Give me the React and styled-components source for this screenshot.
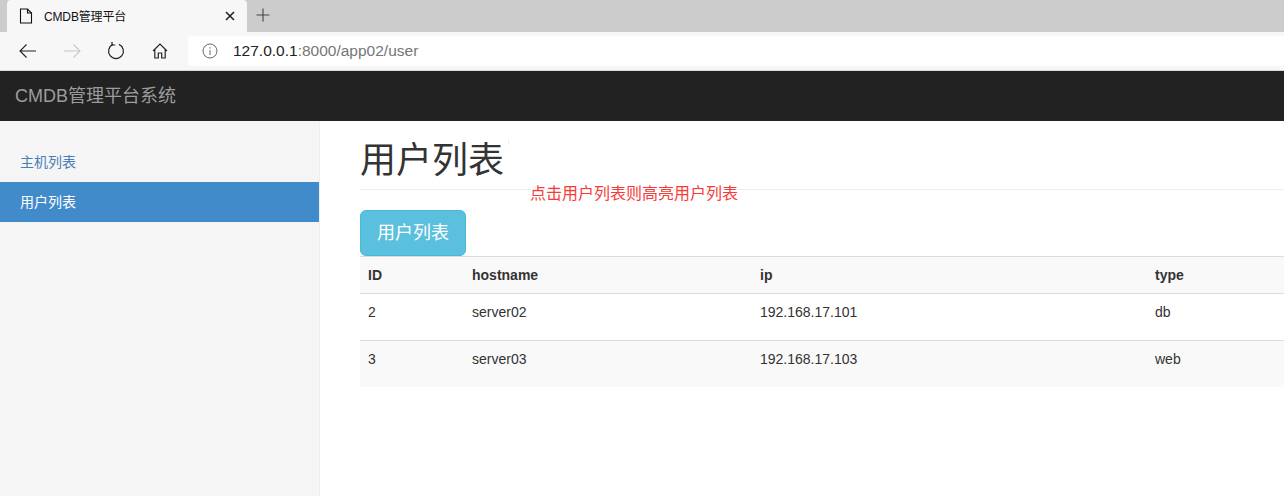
import React from "react";
import styled, { createGlobalStyle } from "styled-components";

const Global = createGlobalStyle`
  html, body { margin: 0; padding: 0; background: #fff; overflow: hidden; }
  * { box-sizing: border-box; }
  body { font-family: "Liberation Sans", "Noto Sans CJK SC", sans-serif; color: #333; font-size: 14px; }
`;
const Page = styled.div`width: 1284px; height: 496px; display: flex; flex-direction: column; overflow: hidden;`;
const TabStrip = styled.div`height: 32px; background: #cccccc; display: flex; align-items: flex-end; padding-left: 7px; flex: none;`;
const Tab = styled.div`width: 240px; height: 32px; background: #f7f7f7; border-radius: 4px 4px 0 0; display: flex; align-items: center; padding-left: 12px; padding-right: 12px;`;
const TabTitle = styled.span`font-size: 12px; letter-spacing: -0.15px; color: #111; margin-left: 11px; flex: 1; white-space: nowrap; position: relative; top: -1px;`;
const TabAction = styled.svg`display: block; flex: none;`;
const NewTab = styled.svg`display: block; margin: 0 0 10px 9px;`;
const Toolbar = styled.div`height: 39px; background: #f7f7f7; display: flex; align-items: center; flex: none; padding-left: 16px; border-bottom: 1px solid #d8d8d8;`;
const NavIcon = styled.svg`display: block; flex: none; margin-right: ${p => p.$gap}px;`;
const Address = styled.div`flex: 1; height: 30px; background: #fff; border-radius: 4px 0 0 4px; display: flex; align-items: center; padding-left: 14px; margin-top: -1px;`;
const Url = styled.span`font-size: 15.5px; margin-left: 15px; color: #767676; white-space: nowrap;`;
const Host = styled.span`color: #222;`;
const Navbar = styled.div`height: 50px; background: #222; flex: none; display: flex; align-items: center; padding-left: 15px;`;
const Brand = styled.span`font-size: 18px; color: #9d9d9d; position: relative; top: -2px;`;
const Body = styled.div`flex: 1; display: flex; min-height: 0;`;
const Sidebar = styled.aside`width: 320px; flex: none; background: #f5f5f5; border-right: 1px solid #eee; padding-top: 21px;`;
const NavItem = styled.div`
  height: 40px; display: flex; align-items: center; padding: 0 0 2px 20px;
  font-size: 14px;
  color: ${p => (p.$active ? "#fff" : "#4a7fb5")};
  background: ${p => (p.$active ? "#428bca" : "transparent")};
`;
const Main = styled.main`flex: 1; padding: 0 0 0 40px; position: relative; min-width: 0;`;
const Heading = styled.h1`margin: 0; height: 69px; border-bottom: 1px solid #eee; font-size: 36px; font-weight: 400; line-height: 40px; padding-top: 20px; color: #333;`;
const Note = styled.span`position: absolute; left: 210px; top: 63px; font-size: 16px; line-height: 20px; color: #f73b3b; white-space: nowrap;`;
const Speck = styled.i`position: absolute; left: 188px; top: 18px; width: 1px; height: 6px; background: #eee;`;
const Button = styled.button`
  display: block; margin: 20px 0 0; width: 106px; height: 46px; padding: 0;
  background: #5bc0de; border: 1px solid #46b8da; border-radius: 6px; color: #fff;
  font-family: inherit; font-size: 18px; line-height: 24px;
`;
const Table = styled.table`width: 924px; border-collapse: collapse; table-layout: fixed; margin-top: 0; font-size: 14px;`;
const Col = styled.col`width: ${p => (p.$w ? `${p.$w}px` : "auto")};`;
const Row = styled.tr`background: ${p => (p.$striped ? "#f9f9f9" : "#fff")};`;
const Th = styled.th`height: 37px; padding: 8px; text-align: left; font-weight: 700; line-height: 20px; border-top: 1px solid #ddd; border-bottom: 1px solid #ddd; vertical-align: middle;`;
const Td = styled.td`height: ${p => p.$h}px; padding: 8px; line-height: 20px; vertical-align: top; border-top: 1px solid #ddd;`;

const rows = [
  { id: "2", cells: ["2", "server02", "192.168.17.101", "db"], height: 47, striped: false },
  { id: "3", cells: ["3", "server03", "192.168.17.103", "web"], height: 46, striped: true },
];

export default function App() {
  return (
    <Page>
      <Global />
      <TabStrip>
        <Tab>
          <TabAction width="14" height="16" viewBox="0 0 14 16" fill="none" stroke="#111" strokeWidth="1.1">
            <path d="M1.5 1h7l4 4v10h-11z" />
            <path d="M8.5 1v4h4" />
          </TabAction>
          <TabTitle>CMDB管理平台</TabTitle>
          <TabAction width="10" height="10" viewBox="0 0 10 10" fill="none" stroke="#222" strokeWidth="1.6">
            <path d="M1 1l8 8M9 1l-8 8" />
          </TabAction>
        </Tab>
        <NewTab width="14" height="14" viewBox="0 0 14 14" fill="none" stroke="#444" strokeWidth="1.1">
          <path d="M7 0.5v13M0.5 7h13" />
        </NewTab>
      </TabStrip>
      <Toolbar>
        <NavIcon $gap={20} width="24" height="18" viewBox="0 0 24 18" fill="none" stroke="#222" strokeWidth="1.1">
          <path d="M4 9h16M10.5 2.5L4 9l6.5 6.5" />
        </NavIcon>
        <NavIcon $gap={23} width="24" height="18" viewBox="0 0 24 18" fill="none" stroke="#c8c8c8" strokeWidth="1.1">
          <path d="M4 9h16M13.5 2.5L20 9l-6.5 6.5" />
        </NavIcon>
        <NavIcon $gap={27} width="18" height="18" viewBox="0 0 18 18" fill="none" stroke="#222" strokeWidth="1.2">
          <path d="M6 2.4A7.4 7.4 0 1 0 12 2.4" />
          <path d="M5 -0.2V3h3.3" />
        </NavIcon>
        <NavIcon $gap={20} width="16" height="18" viewBox="0 0 16 18" fill="none" stroke="#222" strokeWidth="1.2">
          <path d="M1 9L8 2l7 7M2.8 7.5V16H6.3v-5h3.4v5h3.5V7.5" />
        </NavIcon>
        <Address>
          <svg width="16" height="16" viewBox="0 0 16 16" fill="none" stroke="#666" strokeWidth="1">
            <circle cx="8" cy="8" r="7" />
            <path d="M8 7v5M8 4.2v1.4" />
          </svg>
          <Url><Host>127.0.0.1</Host>:8000/app02/user</Url>
        </Address>
      </Toolbar>
      <Navbar><Brand>CMDB管理平台系统</Brand></Navbar>
      <Body>
        <Sidebar>
          <NavItem>主机列表</NavItem>
          <NavItem $active>用户列表</NavItem>
        </Sidebar>
        <Main>
          <Heading>用户列表</Heading>
          <Speck />
          <Note>点击用户列表则高亮用户列表</Note>
          <Button>用户列表</Button>
          <Table>
            <colgroup>
              <Col $w={104} />
              <Col $w={288} />
              <Col $w={395} />
              <Col />
            </colgroup>
            <thead>
              <Row $striped>
                <Th>ID</Th><Th>hostname</Th><Th>ip</Th><Th>type</Th>
              </Row>
            </thead>
            <tbody>
              {rows.map(r => (
                <Row key={r.id} $striped={r.striped}>
                  {r.cells.map(c => <Td key={c} $h={r.height}>{c}</Td>)}
                </Row>
              ))}
            </tbody>
          </Table>
        </Main>
      </Body>
    </Page>
  );
}
